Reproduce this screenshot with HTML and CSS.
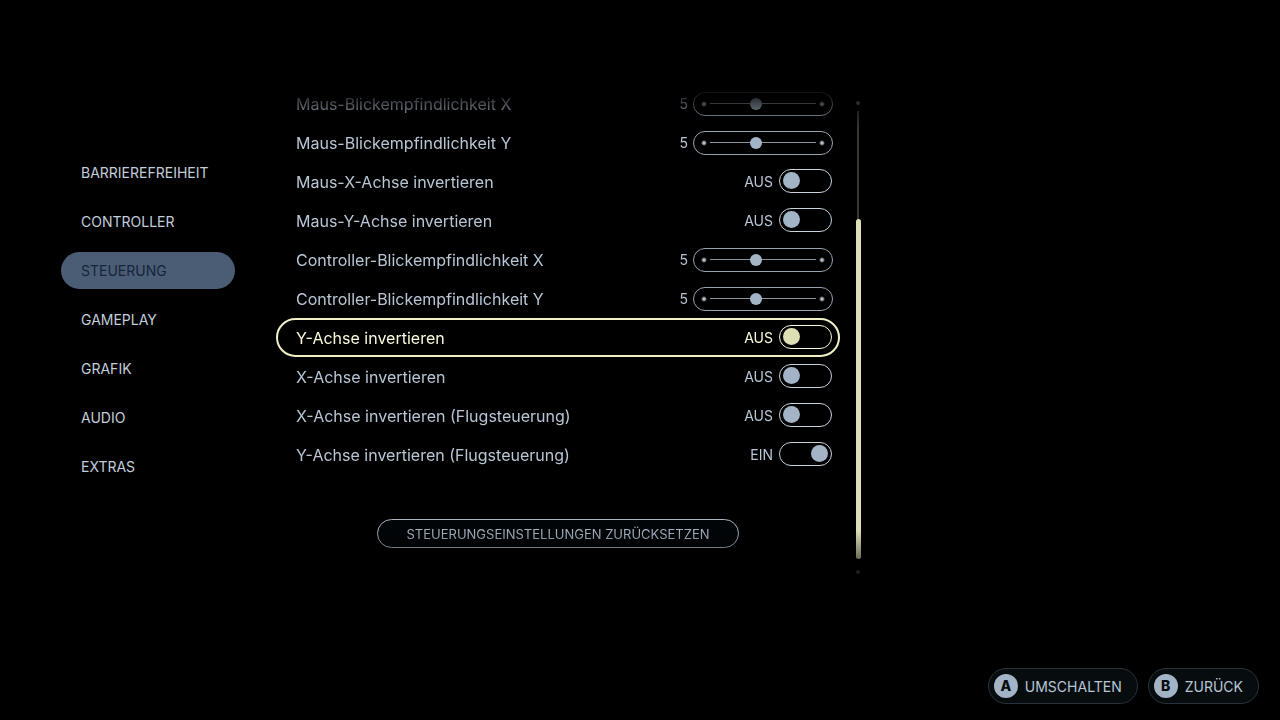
FILE: index.html
```
<!DOCTYPE html>
<html lang="de">
<head>
    <meta charset="UTF-8">
    <meta name="viewport" content="width=device-width, initial-scale=1">
    <title>Steuerung</title>
    <link rel="stylesheet" href="styles.css">
</head>
<body>
    <main class="main">
        <nav class="menu">
            <a class="menu_item" href="#">BARRIEREFREIHEIT</a>
            <a class="menu_item" href="#">CONTROLLER</a>
            <a class="menu_item active" href="#" aria-current="page">STEUERUNG</a>
            <a class="menu_item" href="#">GAMEPLAY</a>
            <a class="menu_item" href="#">GRAFIK</a>
            <a class="menu_item" href="#">AUDIO</a>
            <a class="menu_item" href="#">EXTRAS</a>
        </nav>
        <div class="panel">
            <form class="settings">
                <div class="row">
                    <label class="name" for="mouse_x">Maus-Blickempfindlichkeit X</label>
                    <output class="value" for="mouse_x">5</output>
                    <input class="slider" id="mouse_x" type="range" min="1" max="10" value="5">
                </div>
                <div class="row">
                    <label class="name" for="mouse_y">Maus-Blickempfindlichkeit Y</label>
                    <output class="value" for="mouse_y">5</output>
                    <input class="slider" id="mouse_y" type="range" min="1" max="10" value="5">
                </div>
                <div class="row">
                    <label class="name" for="mouse_invert_x">Maus-X-Achse invertieren</label>
                    <output class="value" for="mouse_invert_x">AUS</output>
                    <input class="toggle" id="mouse_invert_x" type="checkbox">
                </div>
                <div class="row">
                    <label class="name" for="mouse_invert_y">Maus-Y-Achse invertieren</label>
                    <output class="value" for="mouse_invert_y">AUS</output>
                    <input class="toggle" id="mouse_invert_y" type="checkbox">
                </div>
                <div class="row">
                    <label class="name" for="pad_x">Controller-Blickempfindlichkeit X</label>
                    <output class="value" for="pad_x">5</output>
                    <input class="slider" id="pad_x" type="range" min="1" max="10" value="5">
                </div>
                <div class="row">
                    <label class="name" for="pad_y">Controller-Blickempfindlichkeit Y</label>
                    <output class="value" for="pad_y">5</output>
                    <input class="slider" id="pad_y" type="range" min="1" max="10" value="5">
                </div>
                <div class="row selected">
                    <label class="name" for="invert_y">Y-Achse invertieren</label>
                    <output class="value" for="invert_y">AUS</output>
                    <input class="toggle" id="invert_y" type="checkbox">
                </div>
                <div class="row">
                    <label class="name" for="invert_x">X-Achse invertieren</label>
                    <output class="value" for="invert_x">AUS</output>
                    <input class="toggle" id="invert_x" type="checkbox">
                </div>
                <div class="row">
                    <label class="name" for="flight_x">X-Achse invertieren (Flugsteuerung)</label>
                    <output class="value" for="flight_x">AUS</output>
                    <input class="toggle" id="flight_x" type="checkbox">
                </div>
                <div class="row">
                    <label class="name" for="flight_y">Y-Achse invertieren (Flugsteuerung)</label>
                    <output class="value" for="flight_y">EIN</output>
                    <input class="toggle" id="flight_y" type="checkbox" checked>
                </div>
                <button class="reset" type="reset">STEUERUNGSEINSTELLUNGEN ZURÜCKSETZEN</button>
            </form>
            <div class="scrollbar">
                <span class="dot"></span>
                <div class="track"><div class="thumb"></div></div>
                <span class="dot"></span>
            </div>
        </div>
    </main>
    <footer class="footer">
        <button class="hint" type="button"><span class="key">A</span>UMSCHALTEN</button>
        <button class="hint" type="button"><span class="key">B</span>ZURÜCK</button>
    </footer>
</body>
</html>
```
FILE: styles.css
```
* {
    box-sizing: border-box;
}
body {
    margin: 0;
    min-height: 100vh;
    display: flex;
    flex-direction: column;
    background-color: #000;
    color: #b8c6d6;
    font-family: Inter, "Liberation Sans", sans-serif;
    font-size: 16px;
}
button {
    font-family: inherit;
    color: inherit;
    cursor: pointer;
}
.main {
    flex: 1;
    display: flex;
    align-items: flex-start;
    gap: 41px;
    padding: 84px 60px 0 61px;
}
.menu {
    flex: 0 0 174px;
    display: flex;
    flex-direction: column;
    gap: 12px;
    padding-top: 70px;
}
.menu_item {
    padding: 0 20px;
    border-radius: 20px;
    color: #c3cedb;
    font-size: 14px;
    line-height: 37px;
    text-decoration: none;
}
.menu_item.active {
    background-color: #4b5d74;
    color: #15243a;
}
.panel {
    flex: 1;
    max-width: 585px;
    display: flex;
    gap: 15px;
    -webkit-mask-image: linear-gradient(transparent 4px, #000 44px, #000 446px, transparent 502px);
    mask-image: linear-gradient(transparent 4px, #000 44px, #000 446px, transparent 502px);
}
.settings {
    flex: 1;
    padding-bottom: 38px;
    text-align: center;
}
.row {
    display: flex;
    align-items: center;
    gap: 5px;
    height: 39px;
    padding: 0 5px 0 18px;
    border: 2px solid transparent;
    border-radius: 20px;
    text-align: left;
}
.name {
    flex: 1;
}
.value {
    font-size: 14px;
}
.slider {
    appearance: none;
    width: 140px;
    height: 24px;
    margin: 0;
    padding: 0 4px;
    border: 1px solid #98a4b0;
    border-radius: 12px;
    /* end dots and the line between them */
    background:
        radial-gradient(circle at 10px 11px, #b8c0c8 1px, transparent 3px),
        radial-gradient(circle at 128px 11px, #b8c0c8 1px, transparent 3px),
        linear-gradient(#8b939b, #8b939b) center / 106px 1px no-repeat;
}
.slider::-webkit-slider-thumb {
    appearance: none;
    width: 12px;
    height: 12px;
    border-radius: 50%;
    background-color: #a3b4c6;
}
.toggle {
    appearance: none;
    display: flex;
    align-items: center;
    width: 53px;
    height: 24px;
    margin: 0 1px 2px;
    padding: 0 3px;
    border: 1px solid #c8d2dc;
    border-radius: 12px;
}
.toggle::before {
    content: "";
    width: 17px;
    height: 17px;
    border-radius: 50%;
    background-color: #a3b4c6;
}
.toggle:checked {
    justify-content: flex-end;
}
.selected {
    border-color: #f1f0c6;
    color: #fbfadb;
}
.selected .toggle {
    border-color: #fbfadb;
}
.selected .toggle::before {
    background-color: #dfdfb5;
}
.reset {
    height: 29px;
    margin-top: 45px;
    padding: 0 28px;
    border: 1px solid #a9b5c1;
    border-radius: 15px;
    background-color: #020507;
    color: #a3b1bf;
    font-size: 13px;
}
.scrollbar {
    width: 6px;
    display: flex;
    flex-direction: column;
    align-items: center;
    gap: 6px;
    padding: 17px 0 12px;
}
.dot {
    width: 4px;
    height: 4px;
    border-radius: 50%;
    background-color: #78796c;
}
.track {
    flex: 1;
    width: 6px;
    display: flex;
    align-items: flex-end;
    justify-content: center;
    padding-bottom: 5px;
    background: linear-gradient(#3a382a, #3a382a) top / 2px 50% no-repeat;
}
.thumb {
    width: 5px;
    height: 76%;
    border-radius: 3px;
    background-color: #dfdfb5;
}
.footer {
    display: flex;
    justify-content: flex-end;
    gap: 10px;
    padding: 0 21px 16px;
}
.hint {
    display: flex;
    align-items: center;
    gap: 7px;
    height: 36px;
    padding: 0 15px 0 5px;
    border: 1px solid #29323b;
    border-radius: 18px;
    background-color: #070d0f;
    font-size: 14px;
}
.key {
    width: 24px;
    border-radius: 50%;
    background-color: #a3b4c6;
    color: #070d0f;
    font-weight: 800;
    line-height: 24px;
}
```
